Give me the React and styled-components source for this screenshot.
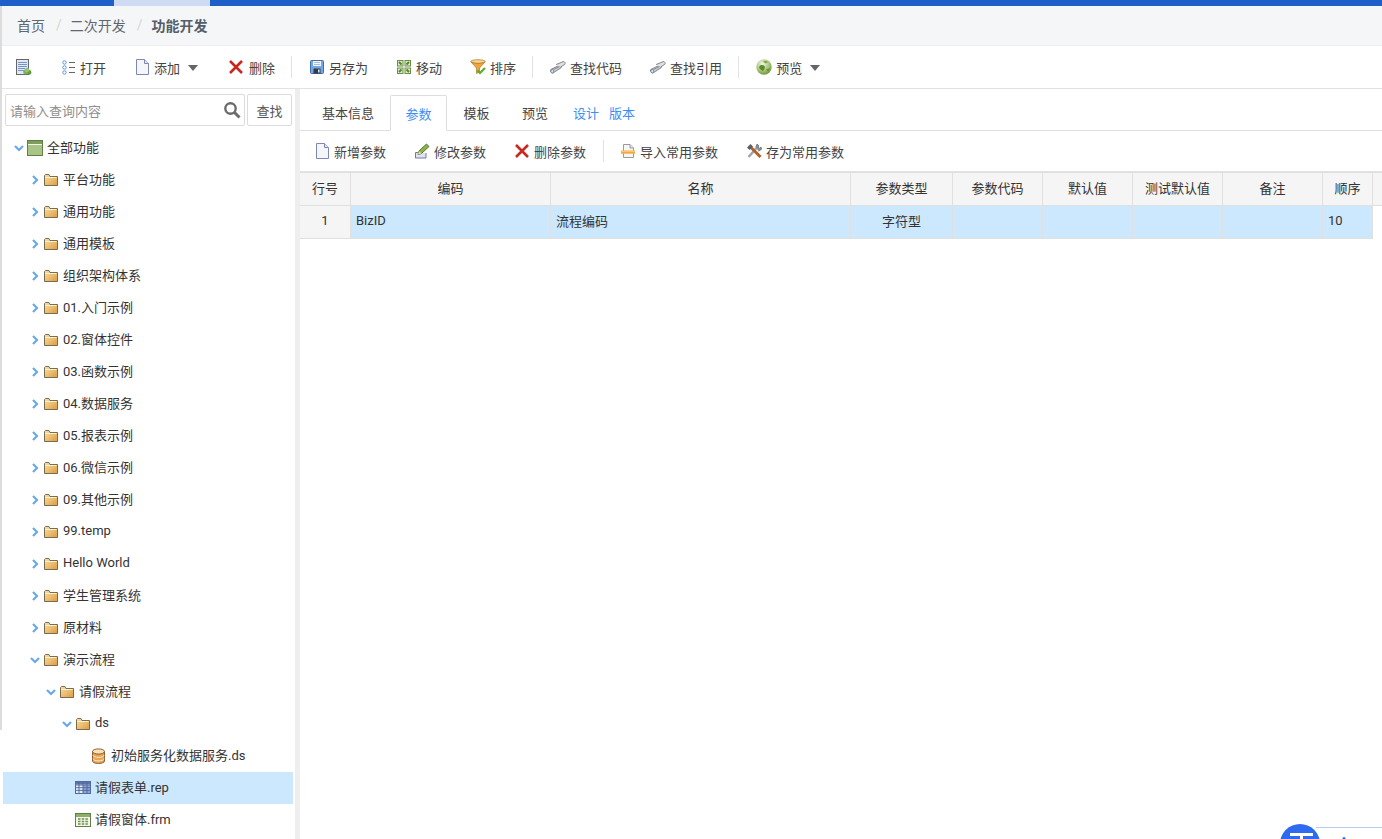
import React from 'react';
import styled, { createGlobalStyle } from 'styled-components';

const Global = createGlobalStyle`
  html, body { margin: 0; padding: 0; height: 100%; overflow: hidden; background: #fff; }
  #root { height: 839px; }
  * { box-sizing: border-box; }
  body { font-family: Roboto, "Noto Sans CJK SC", sans-serif; font-size: 13px; color: #333; }
`;

const Page = styled.div`
  position: relative; width: 1382px; height: 839px; overflow: hidden;
  display: flex; flex-direction: column; background: #fff;
`;
const TopStrip = styled.div`
  height: 6px; flex: none; background: #1f5fc8; padding-left: 114px;
`;
const TopActive = styled.div`
  width: 96px; height: 6px; background: #cfdbf2;
`;
const EdgeBar = styled.div`
  position: absolute; left: 0; top: 6px; width: 2px; height: 724px; background: #dcdcdc;
`;
const Crumbs = styled.nav`
  height: 40px; flex: none; background: #f5f6f8; border-bottom: 1px solid #eceef1;
  display: flex; align-items: center; padding: 0 0 2px 17px; font-size: 14px; color: #5f6770;
`;
const CrumbSep = styled.span`
  color: #d5d5d5; margin: 0 8px 0 11px;
`;
const CrumbNow = styled.b`
  color: #555d68; font-weight: 700; font-size: 14px; margin-left: 1px;
`;
const Bar = styled.div`
  flex: none; display: flex; align-items: center; background: #fff;
  height: ${p => p.$h}px; padding-left: ${p => p.$pl}px;
  border-bottom: 1px solid #e2e2e2;
`;
const Btn = styled.div`
  display: flex; align-items: center; gap: ${p => p.$gap ?? 4}px; color: #444; white-space: nowrap;
  margin-left: ${p => p.$ml || 0}px; font-size: 13px;
`;
const Sep = styled.div`
  width: 1px; height: 22px; background: #e2e2e2; margin-left: ${p => p.$ml}px;
`;
const Caret = styled.span`
  width: 0; height: 0; margin-left: ${p => p.$ml}px; margin-top: 1px;
  border-left: 5px solid transparent; border-right: 5px solid transparent; border-top: 6px solid #666;
`;
const Main = styled.div`
  flex: 1; min-height: 0; display: flex;
`;
const Side = styled.aside`
  width: 295px; flex: none; padding: 5px 2px 0 3px; overflow: hidden; background: #fff;
`;
const Gutter = styled.div`
  width: 5px; flex: none; background: #eeeeee;
`;
const SearchRow = styled.div`
  display: flex; gap: 2px; height: 32px; padding-left: 2px; margin-bottom: 6px;
`;
const SearchBox = styled.div`
  width: 240px; border: 1px solid #dcdcdc; border-radius: 2px; display: flex; align-items: center;
  justify-content: space-between; padding: 0 3px 0 4px; color: #8f8f8f;
`;
const SearchBtn = styled.div`
  width: 45px; border: 1px solid #dcdcdc; border-radius: 2px; display: flex; align-items: center;
  justify-content: center; color: #555;
`;
const Row = styled.div`
  height: 32px; display: flex; align-items: center; color: #333; white-space: nowrap;
  padding-left: ${p => 7 + 16 * p.$level}px;
  background: ${p => p.$sel ? '#cce8ff' : 'transparent'};
`;
const Label = styled.span`
  margin-bottom: 3px;
`;
const ChevSlot = styled.span`
  width: 17px; height: 16px; flex: none; display: flex; align-items: center; justify-content: center;
`;
const IconSlot = styled.span`
  width: 16px; height: 16px; flex: none; display: flex; margin-right: 4px;
`;
const Content = styled.section`
  flex: 1; min-width: 0; display: flex; flex-direction: column; background: #fff;
`;
const Tabs = styled.div`
  height: 43px; flex: none; margin-top: -1px; padding: 7px 0 0 6px; display: flex; align-items: stretch;
  border-bottom: 1px solid #dedede;
`;
const Tab = styled.div`
  width: ${p => p.$w}px; display: flex; align-items: center; justify-content: center; color: ${p => p.$on ? '#3e8ef7' : '#444'};
  ${p => p.$on ? 'border: 1px solid #dedede; border-bottom: 1px solid #fff; margin-bottom: -1px; border-radius: 2px 2px 0 0;' : ''}
`;
const TabLink = styled.div`
  display: flex; align-items: center; color: #3e8ef7; margin-left: ${p => p.$ml}px;
`;
const Head = styled.div`
  flex: none; height: 34px; display: flex; background: #f5f5f5;
  border-top: 1px solid #e0e0e0; border-bottom: 1px solid #e0e0e0;
`;
const Body = styled.div`
  flex: none; height: 33px; display: flex; width: 1073px; border-bottom: 1px solid #e0e0e0;
`;
const Cell = styled.div`
  flex: none; width: ${p => p.$w}px; display: flex; align-items: center; color: #333;
  justify-content: ${p => p.$left ? 'flex-start' : 'center'};
  padding: 0 0 3px ${p => p.$left ? 5 : 0}px;
  border-right: 1px solid #e0e0e0;
  background: ${p => p.$bg || 'transparent'};
`;
const Widget = styled.svg`
  position: absolute; left: 1280px; top: 824px;
`;

const Ic = ({ children, w = 16, h = 16 }) => <svg width={w} height={h} viewBox={`0 0 ${w} ${h}`} fill="none">{children}</svg>;

const Chevron = ({ open }) => (
  <svg width="10" height="10" viewBox="0 0 10 10" fill="none">
    <path d={open ? 'M1 3 5 7 9 3' : 'M3 1 7 5 3 9'} stroke="#6aa8ea" strokeWidth="2.2" />
  </svg>
);
const Folder = () => (
  <Ic>
    <defs><linearGradient id="fld" x1="0" y1="0" x2="1" y2="1"><stop offset="0" stopColor="#fbe0a4" /><stop offset="1" stopColor="#dd9c42" /></linearGradient></defs>
    <path d="M1.5 3.5V13.5H14.5V4.5H7L6 2.5H2.5Z" fill="url(#fld)" stroke="#7d6a4c" />
    <path d="M2.5 5.5H13.5" stroke="#fff3d6" />
  </Ic>
);
const RootIcon = () => (
  <Ic>
    <rect x=".5" y=".5" width="15" height="15" fill="#a9c487" stroke="#5f7f45" />
    <rect x="1" y="1" width="14" height="3" fill="#7d9c5d" />
    <path d="M1 4.5H15" stroke="#eef5e2" />
  </Ic>
);
const DbIcon = () => (
  <Ic>
    <path d="M1.5 3.5V13c0 1.4 2.6 2.5 6 2.5s6-1.1 6-2.5V3.5Z" fill="#e6a557" stroke="#8e5f2c" />
    <ellipse cx="7.5" cy="3.5" rx="6" ry="2.6" fill="#f8e2b8" stroke="#8e5f2c" />
    <path d="M2 7.2c0 1.2 2.4 2.2 5.5 2.2S13 8.4 13 7.2M2 10.7c0 1.2 2.4 2.2 5.5 2.2s5.5-1 5.5-2.2" stroke="#fbeacd" />
  </Ic>
);
const RepIcon = () => (
  <Ic>
    <rect x=".5" y="1.5" width="15" height="12" fill="#e4ebf8" stroke="#55699a" />
    <rect x="1" y="2" width="14" height="2.5" fill="#5b74ad" />
    <rect x="8" y="5" width="7" height="8" fill="#8aa5da" />
    <path d="M4 2V13M8 2V13M12 2V13M1 5H15M1 7.7H15M1 10.4H15" stroke="#4c659b" strokeWidth=".9" />
  </Ic>
);
const FrmIcon = () => (
  <Ic>
    <rect x=".5" y="1.5" width="15" height="13" fill="#f3f7e8" stroke="#5f7f45" />
    <rect x="1" y="2" width="14" height="3" fill="#8fae6c" />
    <path d="M3 7h2.5M6.7 7h2.5M10.4 7h2.5M3 9.5h2.5M6.7 9.5h2.5M10.4 9.5h2.5M3 12h2.5M6.7 12h2.5M10.4 12h2.5" stroke="#6f8f50" strokeWidth="1.5" />
  </Ic>
);
const ReportAdd = () => (
  <Ic>
    <rect x=".5" y=".5" width="12" height="15" fill="#dfe8f3" stroke="#666" />
    <path d="M2 3.5h9M2 5.5h9M2 7.5h9M2 9.5h7M2 11.5h6" stroke="#7396c4" />
    <circle cx="13" cy="13.5" r="2.4" fill="#5f9e3a" />
    <circle cx="9.5" cy="13" r="2.4" fill="#7fb257" />
    <circle cx="11" cy="11" r="2.2" fill="#96c56f" />
  </Ic>
);
const ListIcon = () => (
  <Ic w={13} h={15}>
    <circle cx="2.5" cy="2.5" r="1.7" stroke="#5f96d4" /><circle cx="2.5" cy="7.5" r="1.7" stroke="#5f96d4" /><circle cx="2.5" cy="12.5" r="1.7" stroke="#5f96d4" />
    <path d="M7 2.5h6M7 7.5h6M7 12.5h6" stroke="#666" />
  </Ic>
);
const Doc = () => (
  <Ic w={13} h={16}>
    <path d="M.5.5H8.5L12.5 4.5V15.5H.5Z" fill="#f4f6fb" stroke="#7f88b5" />
    <path d="M8.5.5V4.5H12.5" fill="#dfe4f2" stroke="#7f88b5" />
  </Ic>
);
const Del = () => (
  <Ic>
    <path d="M2 2 14 14M14 2 2 14" stroke="#c8281e" strokeWidth="2.6" />
  </Ic>
);
const Save = () => (
  <Ic w={14} h={14}>
    <rect x=".5" y=".5" width="13" height="13" rx="1" fill="#74a6e0" stroke="#3f6ea8" />
    <rect x="3" y="1" width="8" height="5" fill="#f2f6fb" />
    <path d="M4 2.5h6M4 4.5h6" stroke="#a9bfd9" />
    <rect x="3.5" y="8.5" width="7" height="5" fill="#2f3b4c" />
    <rect x="8" y="9.5" width="1.6" height="3" fill="#dde" />
  </Ic>
);
const Move = () => (
  <Ic>
    <g fill="#dfe8d2" stroke="#6d8f45">
      <rect x="1.5" y="1.5" width="5.5" height="5.5" /><rect x="9" y="1.5" width="5.5" height="5.5" />
      <rect x="1.5" y="9" width="5.5" height="5.5" /><rect x="9" y="9" width="5.5" height="5.5" />
    </g>
    <path d="M3 3 5.5 5.5M13 3l-2.5 2.5M3 13l2.5-2.5M13 13l-2.5-2.5" stroke="#4e8a22" strokeWidth="2" />
  </Ic>
);
const Funnel = () => (
  <Ic>
    <ellipse cx="8" cy="2.5" rx="7.2" ry="1.8" fill="#f9d78f" stroke="#b58334" strokeWidth=".8" />
    <path d="M1 3 6.5 9V14.5L9.5 13V9L15 3C12 5 4 5 1 3Z" fill="#eea63c" stroke="#b58334" strokeWidth=".8" />
    <path d="M7.5 11.5 10 14 15 9" stroke="#63ab2c" strokeWidth="2.2" />
  </Ic>
);
const Binoc = () => (
  <Ic>
    <path d="M.8 10.5 9.5 6.2c1.4-.5 2.6 1.7 1.5 2.6L3 14C1.4 14.5 0 12 .8 10.5Z" fill="#c9ccd0" stroke="#6a6d72" strokeWidth=".8" />
    <path d="M6 5.6 13.2 2.6c1.4-.4 2.6 1.8 1.5 2.8L10.6 8" fill="#dfe1e4" stroke="#6a6d72" strokeWidth=".8" />
    <ellipse cx="2.2" cy="12.2" rx="1.3" ry="1.8" fill="#eaf1fb" stroke="#4d6f9c" strokeWidth=".7" />
    <path d="M3.5 10.5 9.5 7.6" stroke="#8b8f95" />
  </Ic>
);
const Globe = () => (
  <Ic>
    <defs><radialGradient id="glb" cx=".4" cy=".3" r=".8"><stop offset="0" stopColor="#f2f6e8" /><stop offset=".55" stopColor="#a9c47a" /><stop offset="1" stopColor="#5f8a30" /></radialGradient></defs>
    <circle cx="8" cy="8" r="7.7" fill="url(#glb)" />
    <path d="M3 8c1-2.5 3.5-2.5 5-1.5s.5 4-1 5.5c-1.5-.5-3.5-2-4-4Z" fill="#5b8a2a" />
    <path d="M10 10.5l4-1.5-1.5 4Z" fill="#6b962f" />
    <path d="M7 2.5c2-.8 4-.5 5 .8L9.5 4.5Z" fill="#7fa642" />
  </Ic>
);
const Pencil = () => (
  <Ic>
    <path d="M1.5 9.5H8M1.5 9.5V15H12V10" fill="#dfe4f0" stroke="#6d7aa8" />
    <path d="M4 11.5 5 8 12.5 1l2.5 2.5L7.5 10.5Z" fill="#8cb350" stroke="#56752b" />
    <path d="M4 11.5 5 8 7.5 10.5Z" fill="#f0d9a8" />
  </Ic>
);
const ImportIcon = () => (
  <Ic w={14} h={16}>
    <path d="M2.5 1.5H9L12.5 5V14.5H2.5Z" fill="#f6f6f6" stroke="#9a9a9a" />
    <path d="M9 1.5V5H12.5" fill="#e6e6e6" stroke="#9a9a9a" />
    <rect x="0" y="7.5" width="14" height="3.2" fill="#f3aa3e" />
    <path d="M0 8.2H14" stroke="#fbd48d" />
  </Ic>
);
const Tools = () => (
  <Ic>
    <path d="M2.5 14 11.5 4" stroke="#9ea5ad" strokeWidth="2.6" />
    <path d="M9.8 4.2 11 1l2 1.8-1 1.4 1.6 1 1.4-1.2.6 2.2-3 2" fill="#8a9199" stroke="#6a7077" strokeWidth=".8" />
    <path d="M4 3.5 14.5 14" stroke="#b4602a" strokeWidth="3" />
    <path d="M1 4.5 4.5 1l2.5 2.5L3.5 7Z" fill="#5c6066" />
  </Ic>
);
const Mag = () => (
  <svg width="18" height="18" viewBox="0 0 18 18" fill="none">
    <circle cx="7.5" cy="7.5" r="5.2" stroke="#6b6b6b" strokeWidth="2.4" />
    <path d="M11.5 11.5 16.5 16.5" stroke="#6b6b6b" strokeWidth="3" />
  </svg>
);

const tree = [
  ['全部功能', 0, 'open', 'root'],
  ...['平台功能', '通用功能', '通用模板', '组织架构体系', '01.入门示例', '02.窗体控件', '03.函数示例', '04.数据服务', '05.报表示例', '06.微信示例', '09.其他示例', '99.temp', 'Hello World', '学生管理系统', '原材料'].map(t => [t, 1, 'closed', 'folder']),
  ['演示流程', 1, 'open', 'folder'],
  ['请假流程', 2, 'open', 'folder'],
  ['ds', 3, 'open', 'folder'],
  ['初始服务化数据服务.ds', 4, null, 'db'],
  ['请假表单.rep', 3, null, 'rep', true],
  ['请假窗体.frm', 3, null, 'frm'],
];
const icons = { root: RootIcon, folder: Folder, db: DbIcon, rep: RepIcon, frm: FrmIcon };
const cols = [
  ['行号', 51], ['编码', 200], ['名称', 300], ['参数类型', 102], ['参数代码', 90],
  ['默认值', 90], ['测试默认值', 90], ['备注', 100], ['顺序', 50],
];
const cells = ['1', 'BizID', '流程编码', '字符型', '', '', '', '', '10'];
const leftCols = [1, 2, 8];

export default function App() {
  return (
    <Page>
      <Global />
      <TopStrip><TopActive /></TopStrip>
      <EdgeBar />
      <Crumbs>
        <span>首页</span><CrumbSep>/</CrumbSep>
        <span>二次开发</span><CrumbSep>/</CrumbSep>
        <CrumbNow>功能开发</CrumbNow>
      </Crumbs>
      <Bar $h={43} $pl={16}>
        <Btn><ReportAdd /></Btn>
        <Btn $ml={30} $gap={5}><ListIcon />打开</Btn>
        <Btn $ml={30} $gap={5}><Doc />添加<Caret $ml={3} /></Btn>
        <Btn $ml={30} $gap={5}><Del />删除</Btn>
        <Sep $ml={16} />
        <Btn $ml={18} $gap={5}><Save />另存为</Btn>
        <Btn $ml={28}><Move />移动</Btn>
        <Btn $ml={28}><Funnel />排序</Btn>
        <Sep $ml={16} />
        <Btn $ml={17}><Binoc />查找代码</Btn>
        <Btn $ml={28}><Binoc />查找引用</Btn>
        <Sep $ml={16} />
        <Btn $ml={17}><Globe />预览<Caret $ml={4} /></Btn>
      </Bar>
      <Main>
        <Side>
          <SearchRow>
            <SearchBox>请输入查询内容<Mag /></SearchBox>
            <SearchBtn>查找</SearchBtn>
          </SearchRow>
          {tree.map(([label, level, state, icon, sel]) => {
            const I = icons[icon];
            return (
              <Row key={label} $level={level} $sel={sel}>
                <ChevSlot>{state && <Chevron open={state === 'open'} />}</ChevSlot>
                <IconSlot><I /></IconSlot>
                <Label>{label}</Label>
              </Row>
            );
          })}
        </Side>
        <Gutter />
        <Content>
          <Tabs>
            <Tab $w={84}>基本信息</Tab>
            <Tab $w={57} $on>参数</Tab>
            <Tab $w={59}>模板</Tab>
            <Tab $w={58}>预览</Tab>
            <TabLink $ml={9}>设计</TabLink>
            <TabLink $ml={10}>版本</TabLink>
          </Tabs>
          <Bar $h={41} $pl={16}>
            <Btn $gap={5}><Doc />新增参数</Btn>
            <Btn $ml={28}><Pencil />修改参数</Btn>
            <Btn $ml={28}><Del />删除参数</Btn>
            <Sep $ml={17} />
            <Btn $ml={17} $gap={5}><ImportIcon />导入常用参数</Btn>
            <Btn $ml={28}><Tools />存为常用参数</Btn>
          </Bar>
          <Head>
            {cols.map(([t, w]) => <Cell key={t} $w={w}>{t}</Cell>)}
          </Head>
          <Body>
            {cols.map(([t, w], i) => (
              <Cell key={t} $w={w} $left={leftCols.includes(i)} $bg={i === 0 ? '#f5f5f5' : '#cce8ff'}>{cells[i]}</Cell>
            ))}
          </Body>
        </Content>
      </Main>
      <Widget width="102" height="15" viewBox="0 0 102 15" fill="none">
        <path d="M36 3.5H102" stroke="#b9cdf2" />
        <circle cx="20" cy="20" r="20" fill="#2f6bf0" />
        <path d="M10 10.5H33M21.5 10.5V15" stroke="#fff" strokeWidth="3" />
        <circle cx="64" cy="14.5" r="1.5" fill="#2f6bf0" />
      </Widget>
    </Page>
  );
}
